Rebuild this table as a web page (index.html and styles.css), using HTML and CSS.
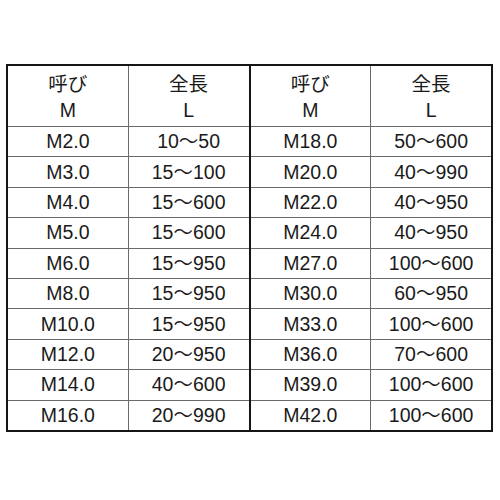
FILE: index.html
```html
<!DOCTYPE html>
<html lang="ja">
<head>
<meta charset="utf-8">
<link rel="stylesheet" href="styles.css">
</head>
<body>
<table class="spec">
  <thead>
    <tr class="head">
      <th>呼び<br>M</th>
      <th class="mid">全長<br>L</th>
      <th>呼び<br>M</th>
      <th>全長<br>L</th>
    </tr>
  </thead>
  <tbody>
    <tr><td>M2.0</td><td class="mid">10〜50</td><td>M18.0</td><td>50〜600</td></tr>
    <tr><td>M3.0</td><td class="mid">15〜100</td><td>M20.0</td><td>40〜990</td></tr>
    <tr><td>M4.0</td><td class="mid">15〜600</td><td>M22.0</td><td>40〜950</td></tr>
    <tr><td>M5.0</td><td class="mid">15〜600</td><td>M24.0</td><td>40〜950</td></tr>
    <tr><td>M6.0</td><td class="mid">15〜950</td><td>M27.0</td><td>100〜600</td></tr>
    <tr><td>M8.0</td><td class="mid">15〜950</td><td>M30.0</td><td>60〜950</td></tr>
    <tr><td>M10.0</td><td class="mid">15〜950</td><td>M33.0</td><td>100〜600</td></tr>
    <tr><td>M12.0</td><td class="mid">20〜950</td><td>M36.0</td><td>70〜600</td></tr>
    <tr><td>M14.0</td><td class="mid">40〜600</td><td>M39.0</td><td>100〜600</td></tr>
    <tr><td>M16.0</td><td class="mid">20〜990</td><td>M42.0</td><td>100〜600</td></tr>
  </tbody>
</table>
</body>
</html>
```
FILE: styles.css
```css
html, body {
  margin: 0;
  padding: 0;
  background: #fff;
}
body {
  padding: 64px 0 0 6px;
  font-family: "Liberation Sans", Arial, "Noto Sans CJK JP", sans-serif;
  color: #1a1a1a;
}
.spec {
  border-collapse: collapse;
  width: 487px;
  border: 2px solid #151515;
  table-layout: fixed;
}
.spec th,
.spec td {
  border: 1px solid #6a6a6a;
  text-align: center;
  padding: 0;
  font-size: 19.5px;
  font-weight: normal;
}
.spec th {
  height: 59px;
  line-height: 26px;
  padding-top: 1px;
}
.spec td {
  height: 29.4px;
  line-height: 29px;
}
.spec .mid {
  border-right: 2px solid #151515;
}
```
